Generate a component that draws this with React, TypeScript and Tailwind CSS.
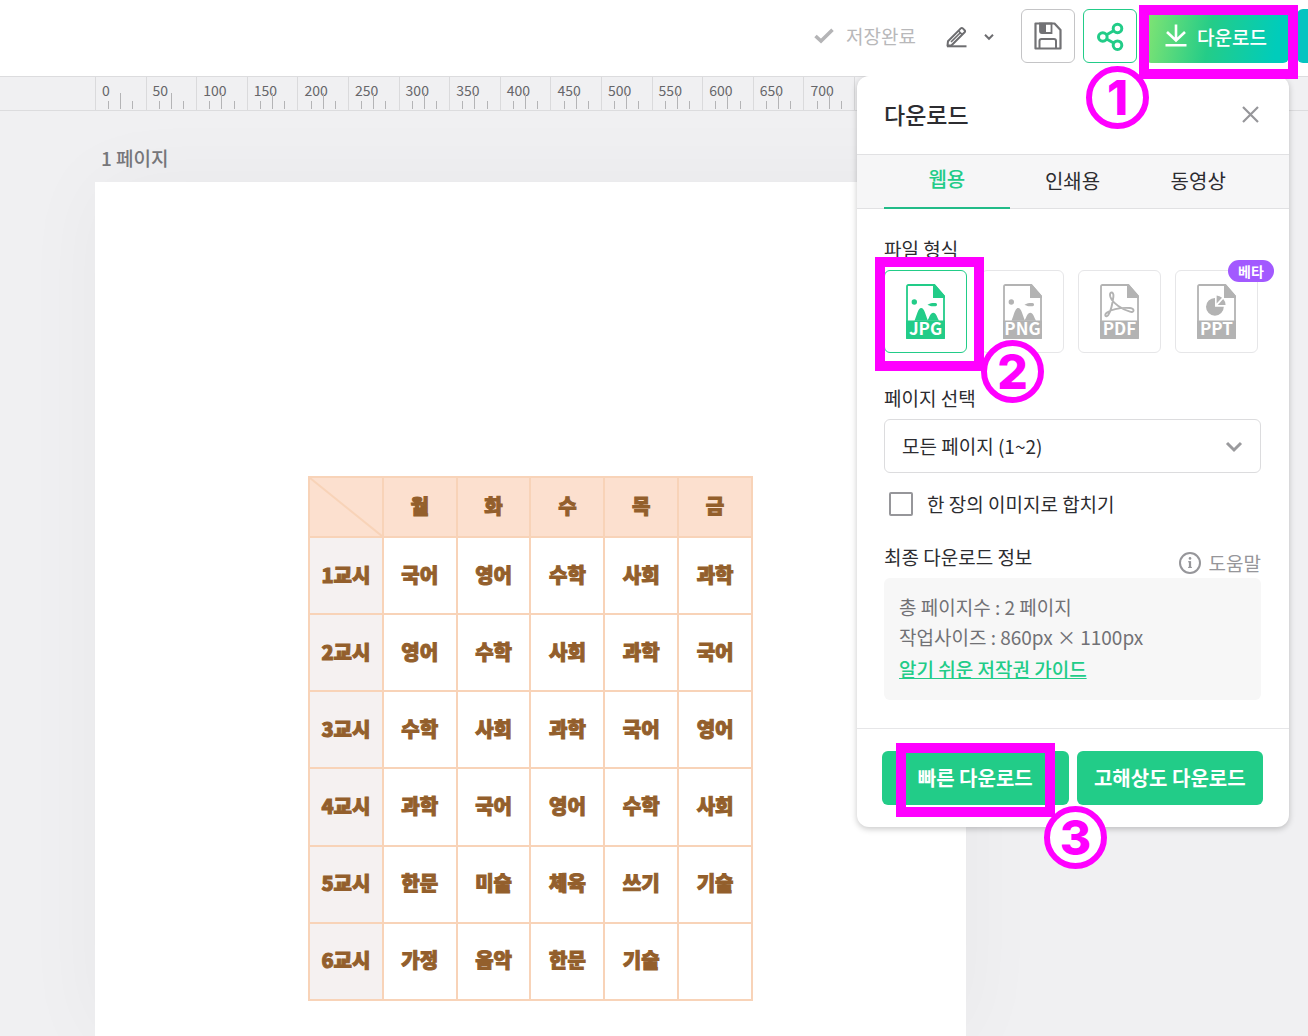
import type { ReactNode } from "react";

const RULER_MARKS = [0, 50, 100, 150, 200, 250, 300, 350, 400, 450, 500, 550, 600, 650, 700];

const DAYS = ["월", "화", "수", "목", "금"];

const TIMETABLE = [
  { period: "1교시", subjects: ["국어", "영어", "수학", "사회", "과학"] },
  { period: "2교시", subjects: ["영어", "수학", "사회", "과학", "국어"] },
  { period: "3교시", subjects: ["수학", "사회", "과학", "국어", "영어"] },
  { period: "4교시", subjects: ["과학", "국어", "영어", "수학", "사회"] },
  { period: "5교시", subjects: ["한문", "미술", "체육", "쓰기", "기술"] },
  { period: "6교시", subjects: ["가정", "음악", "한문", "기술", ""] },
];

const TABS = ["웹용", "인쇄용", "동영상"];

// Numbered step marker
function StepNumber({ value, className }: { value: number; className: string }) {
  return (
    <span
      className={`pointer-events-none absolute z-10 flex size-[63px] items-center justify-center rounded-full border-6 border-[#ff00ff] bg-white font-['Inter',sans-serif] text-5xl font-extrabold leading-none text-[#ff00ff] ${className}`}
    >
      {value}
    </span>
  );
}

// Magenta frame drawn around a step's control
function StepFrame({ className }: { className: string }) {
  return (
    <span
      className={`pointer-events-none absolute border-10 border-[#ff00ff] ${className}`}
    />
  );
}

function CheckIcon() {
  return (
    <svg width="20" height="16" viewBox="0 0 20 16" fill="none" aria-hidden="true">
      <path d="M1.5 8L7 13L18.5 1.8" stroke="#b4b4b6" strokeWidth="3.6" />
    </svg>
  );
}

function PencilIcon() {
  return (
    <svg width="22" height="22" viewBox="0 0 22 22" fill="none" aria-hidden="true">
      <path
        d="M1.5 19.6L2 15.2L14.8 2.4Q15.8 1.4 16.8 2.4L18.6 4.2Q19.6 5.2 18.6 6.2L5.6 19.2L1.5 19.6Z"
        stroke="#6d6d70"
        strokeWidth="2"
        strokeLinejoin="round"
      />
      <path d="M12.4 4.8L16.2 8.6M5 16L14 7" stroke="#6d6d70" strokeWidth="1.6" />
      <path d="M1 20.3H20.5" stroke="#6d6d70" strokeWidth="2" />
    </svg>
  );
}

function SaveIcon() {
  return (
    <svg width="28" height="28" viewBox="0 0 28 28" fill="none" aria-hidden="true">
      <path d="M1.5 1.5H20.5L26.5 8V26.5H1.5Z" stroke="#727275" strokeWidth="2.2" strokeLinejoin="round" />
      <path d="M6 1.5H17.5V11H8Q6 11 6 9Z" stroke="#727275" strokeWidth="1.8" />
      <path d="M6 2H12V11H8Q6 11 6 9Z" fill="#727275" />
      <path d="M5.5 26V19Q5.5 17 7.5 17H20Q22 17 22 19V26" stroke="#727275" strokeWidth="2" />
    </svg>
  );
}

function ShareIcon() {
  return (
    <svg width="28" height="30" viewBox="0 0 28 30" fill="none" stroke="#22cc88" strokeWidth="3" aria-hidden="true">
      <circle cx="6.8" cy="16" r="4.3" />
      <circle cx="21.5" cy="7.5" r="4.3" />
      <circle cx="21.5" cy="24.2" r="4.3" />
      <path d="M10.6 13.8L17.6 9.8M10.6 18L17.6 22" />
    </svg>
  );
}

function DownloadIcon() {
  return (
    <svg width="22" height="24" viewBox="0 0 22 24" fill="none" stroke="white" strokeWidth="2.6" aria-hidden="true">
      <path d="M11 0.5V16M2 8L11 16.5L20 8M0.5 21.3H21.5" />
    </svg>
  );
}

function FileIcon({ label, children }: { label: string; children: ReactNode }) {
  return (
    <svg width="39" height="55" viewBox="0 0 39 55" fill="none" aria-hidden="true">
      <path
        d="M1 54V2.5Q1 1 2.5 1H28.3L38 12V54Z"
        stroke="currentColor"
        strokeWidth="1.8"
      />
      <path d="M27 0.5H29L39 12V14H27Z" fill="currentColor" />
      <path d="M0 36.5H39V53Q39 54.5 37.5 54.5H1.5Q0 54.5 0 53Z" fill="currentColor" />
      {children}
      <text
        x="19.5"
        y="51"
        textAnchor="middle"
        fill="white"
        fontFamily="'Noto Sans CJK KR', sans-serif"
        fontWeight="700"
        fontSize="17"
      >
        {label}
      </text>
    </svg>
  );
}

function PictureMark() {
  return (
    <g fill="currentColor">
      <circle cx="8.3" cy="18" r="2.7" />
      <path d="M21.5 20.8C23 20.4 24 19 26.5 19H29.5C31.5 19 31.5 22.2 29.5 22.2H25.5C23.8 22.2 23 21.2 21.5 20.8Z" />
      <path d="M8.5 36.8C11 31 12 24 15.2 24C18.5 24 19.5 31 22 36.8Z" />
      <path d="M21.5 36.8C23.5 33 24.5 28.8 27.3 28.8C30 28.8 31 33 33 36.8Z" />
    </g>
  );
}

function PdfMark() {
  return (
    <path
      d="M10.4 13C8.4 7 14.2 7 13.4 12.5C12.6 19 11 27 8.3 31C6.2 34 3.4 31 7 28.6C12 25.2 22 23.6 30 24C35.4 24.4 34 29.2 30 27.6C22.5 25.4 12.8 19.5 10.4 13Z"
      stroke="currentColor"
      strokeWidth="1.9"
    />
  );
}

function PptMark() {
  return (
    <g fill="currentColor">
      <path d="M18 13.9V22.7H26.8A8.9 8.9 0 1 1 18 13.9Z" />
      <path d="M19.6 11.5A9 9 0 0 1 25 13.8L19.6 19.6Z" />
      <path d="M26.2 15A9 9 0 0 1 28.6 21H20.8Z" />
    </g>
  );
}

const FORMATS = [
  { label: "JPG", mark: <PictureMark /> },
  { label: "PNG", mark: <PictureMark /> },
  { label: "PDF", mark: <PdfMark /> },
  { label: "PPT", mark: <PptMark />, beta: true },
];

function TopBar() {
  return (
    <header className="relative z-20 flex shrink-0 items-start justify-end gap-2 bg-white pt-[9px] pb-[13px]">
      <div className="mr-[18px] flex h-[54px] items-center">
        <CheckIcon />
        <span className="ml-3 pt-px text-[19px] text-[#b8b8ba]">저장완료</span>
        <button type="button" aria-label="편집" className="ml-[30px] flex items-center gap-[15px] pt-0.5">
          <PencilIcon />
          <svg width="12" height="8" viewBox="0 0 12 8" fill="none" aria-hidden="true">
            <path d="M2 1.8L6 5.8L10 1.8" stroke="#6d6d70" strokeWidth="2" />
          </svg>
        </button>
      </div>
      <button
        type="button"
        aria-label="저장"
        className="flex size-[54px] items-center justify-center rounded-md border border-[#c4c4c6]"
      >
        <SaveIcon />
      </button>
      <button
        type="button"
        aria-label="공유"
        className="flex size-[54px] items-center justify-center rounded-md border border-[#22cc88]"
      >
        <ShareIcon />
      </button>
      <div className="relative">
        <button
          type="button"
          className="flex h-[54px] w-36 items-center justify-center gap-[10px] rounded-md bg-linear-[100deg,#85e572_0%,#24cc88_45%,#00ccbb_90%] pr-0.5 text-[19px] font-medium text-white"
        >
          <DownloadIcon />
          <span className="pt-0.5">다운로드</span>
        </button>
        <StepFrame className="-top-1 -left-1.5 h-[74px] w-[159px]" />
        <StepNumber value={1} className="top-[57px] -left-[59px]" />
      </div>
      <button
        type="button"
        aria-label="더보기"
        className="h-[54px] w-[11px] rounded-l-md bg-[#06c4c0]"
      />
    </header>
  );
}

function Ruler() {
  return (
    <div className="h-[35px] shrink-0 border-y border-[#dcdcde] bg-[#f0f0f2] pl-[95px]">
      <div className="grid h-full w-[760px] grid-cols-15 border-r border-[#dadadc]">
        {RULER_MARKS.map((mark) => (
          <div key={mark} className="relative border-l border-[#dadadc] pl-1.5">
            <span className="text-sm leading-[26px] text-[#66666a]">{mark}</span>
            <div className="absolute inset-x-0 bottom-px grid grid-cols-4 items-end pl-px">
              <i className="h-2 border-r border-[#b4b4b6]" />
              <i className="h-4 border-r border-[#b4b4b6]" />
              <i className="h-2 border-r border-[#b4b4b6]" />
            </div>
          </div>
        ))}
      </div>
    </div>
  );
}

function Timetable() {
  return (
    <table className="mx-auto h-[525px] w-[445px] table-fixed border-collapse text-center text-xl font-black text-[#935f2c] [-webkit-text-stroke:1px_#935f2c]">
      <thead>
        <tr className="h-[60px] bg-[#fce0cf]">
          <td className="border-2 border-[#f8d3b8] p-0">
            <svg
              className="block h-[58px] w-full"
              viewBox="0 0 72 58"
              preserveAspectRatio="none"
              aria-hidden="true"
            >
              <path d="M0 0L72 58" stroke="#f8d3b8" strokeWidth="2" />
            </svg>
          </td>
          {DAYS.map((day) => (
            <th key={day} scope="col" className="border-2 border-[#f8d3b8] p-0 pb-0.5 font-black">
              {day}
            </th>
          ))}
        </tr>
      </thead>
      <tbody>
        {TIMETABLE.map((row) => (
          <tr key={row.period} className="h-[77px]">
            <th scope="row" className="border-2 border-[#f8d3b8] bg-[#f5f1f1] p-0 pb-0.5 font-black">
              {row.period}
            </th>
            {row.subjects.map((subject, i) => (
              <td key={i} className="border-2 border-[#f8d3b8] p-0 pb-0.5">
                {subject}
              </td>
            ))}
          </tr>
        ))}
      </tbody>
    </table>
  );
}

function FormatPicker() {
  return (
    <fieldset>
      <legend className="leading-7">파일 형식</legend>
      <div className="mt-[7px] flex gap-[14px]">
        {FORMATS.map((format, i) => (
          <div key={format.label} className="relative">
            <label className="flex size-[83px] cursor-pointer items-center justify-center rounded-md border border-[#e6e6e8] text-[#b3b3b3] has-checked:border-[#22cc88] has-checked:text-[#22cc88]">
              <input
                type="radio"
                name="format"
                aria-label={format.label}
                defaultChecked={i === 0}
                className="sr-only"
              />
              <FileIcon label={format.label}>{format.mark}</FileIcon>
            </label>
            {format.beta && (
              <span className="absolute -top-2.5 -right-4 flex h-[22px] w-[46px] items-center justify-center rounded-full bg-[#a259ff] text-sm font-bold leading-none text-white">
                베타
              </span>
            )}
            {i === 0 && (
              <>
                <StepFrame className="-top-[13px] -left-[9px] z-10 h-[114px] w-[109px]" />
                <StepNumber value={2} className="top-[70px] left-[97px]" />
              </>
            )}
          </div>
        ))}
      </div>
    </fieldset>
  );
}

function DownloadPanel() {
  return (
    <section className="absolute top-[76px] right-[19px] z-10 w-[432px] rounded-xl bg-white text-[19px] text-[#2c2c30] shadow-[0_2px_6px_rgba(0,0,0,0.22)]">
      <div className="flex h-[78px] items-center justify-between pr-[30px] pb-0.5 pl-[27px]">
        <h2 className="text-[23px] font-medium">다운로드</h2>
        <button type="button" aria-label="닫기">
          <svg width="17" height="17" viewBox="0 0 17 17" fill="none" aria-hidden="true">
            <path d="M1 1L16 16M16 1L1 16" stroke="#96969a" strokeWidth="2.2" />
          </svg>
        </button>
      </div>

      <div className="flex h-[55px] border-y border-[#e1e1e3] bg-[#f6f6f7] pr-7 pl-[27px]">
        {TABS.map((tab, i) => (
          <button
            key={tab}
            type="button"
            className={
              i === 0
                ? "-mb-px flex-1 border-b-2 border-[#22bb88] pb-1 text-xl font-medium text-[#22cc88]"
                : "flex-1 pb-0.5 text-xl"
            }
          >
            {tab}
          </button>
        ))}
      </div>

      <div className="pt-[26px] pr-7 pb-7 pl-[27px]">
        <FormatPicker />

        <label htmlFor="pages" className="mt-[31px] block leading-7">
          페이지 선택
        </label>
        <div className="relative mt-[7px]">
          <select
            id="pages"
            className="h-[54px] w-full appearance-none rounded-md border border-[#dcdcde] bg-white px-[17px]"
          >
            <option>모든 페이지 (1~2)</option>
          </select>
          <svg
            className="pointer-events-none absolute top-[22px] right-[18px]"
            width="18"
            height="12"
            viewBox="0 0 18 12"
            fill="none"
            aria-hidden="true"
          >
            <path d="M2 2L9 9L16 2" stroke="#9a9a9d" strokeWidth="3" />
          </svg>
        </div>

        <label className="mt-[17px] ml-[5px] flex items-center gap-[14px] leading-7">
          <input
            type="checkbox"
            className="size-6 appearance-none rounded-xs border-2 border-[#96969a] checked:bg-[#22cc88]"
          />
          한 장의 이미지로 합치기
        </label>

        <div className="mt-[25px] mb-px flex justify-between leading-7">
          <h3>최종 다운로드 정보</h3>
          <button type="button" className="mt-1.5 flex items-center gap-2 text-[#96969a]">
            <svg width="22" height="22" viewBox="0 0 22 22" fill="none" aria-hidden="true">
              <circle cx="11" cy="11" r="10" stroke="currentColor" strokeWidth="2" />
              <path d="M11 9.2V15.8" stroke="currentColor" strokeWidth="2.2" />
              <path d="M9 9.8H11.5M9 15.4H13" stroke="currentColor" strokeWidth="1" />
              <circle cx="11" cy="6.4" r="1.3" fill="currentColor" />
            </svg>
            도움말
          </button>
        </div>
        <div className="h-[122px] rounded-md bg-[#f7f7f7] px-[15px] pt-[14px] leading-[30px] text-[#717175]">
          <p>총 페이지수 : 2 페이지</p>
          <p>작업사이즈 : 860px × 1100px</p>
          <p className="mt-0.5">
            <a href="#guide" className="font-medium text-[#22cc88] underline">
              알기 쉬운 저작권 가이드
            </a>
          </p>
        </div>
      </div>

      <div className="flex gap-2 border-t border-[#e6e6e8] pt-[22px] pr-[26px] pb-[22px] pl-[25px] text-xl font-bold text-white">
        <div className="relative flex-1">
          <button type="button" className="h-[54px] w-full rounded-md bg-[#22cc88]">
            빠른 다운로드
          </button>
          <StepFrame className="-top-2 left-[14px] h-[74px] w-[159px]" />
          <StepNumber value={3} className="top-[55px] left-[162px]" />
        </div>
        <button type="button" className="h-[54px] flex-1 rounded-md bg-[#22cc88]">
          고해상도 다운로드
        </button>
      </div>
    </section>
  );
}

export default function App() {
  return (
    <div className="relative flex h-screen flex-col overflow-hidden bg-[#f0f0f2] font-['Noto_Sans_CJK_KR',sans-serif]">
      <TopBar />
      <Ruler />
      <main className="flex flex-1 flex-col pl-[95px]">
        <h1 className="pt-[33px] pb-[10px] pl-1.5 text-[19px] leading-7 font-medium text-[#77777b]">
          1 페이지
        </h1>
        <article className="w-[871px] flex-1 bg-white pt-[294px] shadow-[0_0_80px_rgba(0,0,0,0.04)]">
          <Timetable />
        </article>
      </main>
      <DownloadPanel />
    </div>
  );
}
